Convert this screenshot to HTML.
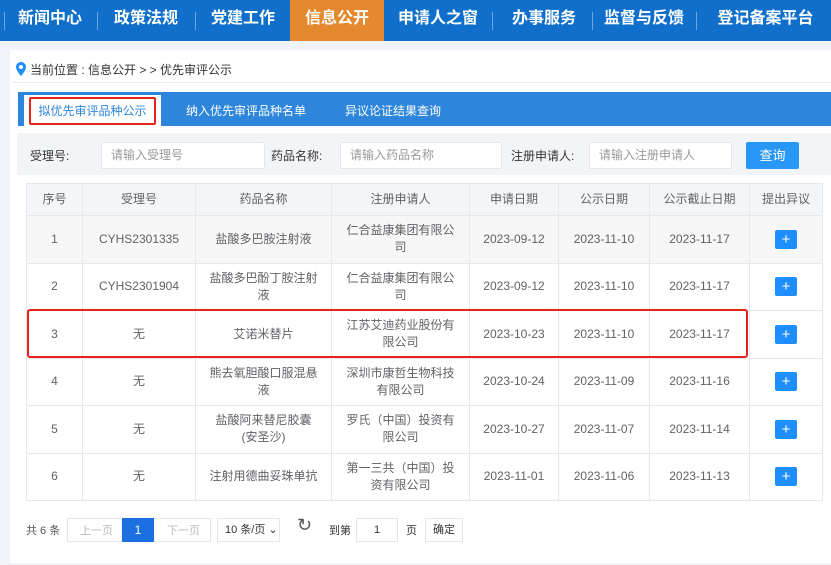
<!DOCTYPE html>
<html><head><meta charset="utf-8"><style>
*{box-sizing:border-box;margin:0;padding:0}
body{width:831px;height:565px;overflow:hidden;background:#f0f3f9;font-family:"Liberation Sans","Noto Sans CJK SC",sans-serif;position:relative;color:#333}
.nav{position:absolute;left:0;top:0;width:831px;height:41px;background:#0f6fca}
.nav span{position:absolute;top:0;height:41px;line-height:38px;color:#fff;font-size:16px;font-weight:bold;text-align:center}
.nav i{position:absolute;top:12px;width:1px;height:18px;background:#6ea6dc}
.card{position:absolute;left:10px;top:50px;width:821px;height:513px;background:#fff}
.ab{position:absolute}
.tabs{position:absolute;left:18px;top:92px;width:813px;height:34px;background:#2d86dc}
table{position:absolute;left:26px;top:183px;border-collapse:collapse;font-size:12px;color:#606266}
td{border:1px solid #e6e8eb;text-align:center;line-height:17px;padding:0 4px}
tr.h td{background:#f4f5f7;height:32px}
tr.r td{height:47.5px}
tr.g td{background:#f7f7f7}
.plus{display:inline-block;width:22px;height:19px;background:#1f8fff;color:#fff;border-radius:2px;line-height:19px;font-size:15px;vertical-align:middle}
.inp{position:absolute;height:27px;border:1px solid #e4e6ea;background:#fff;font-size:12px;color:#999;line-height:25px;padding-left:9px;border-radius:2px}
.lbl{position:absolute;font-size:12px;color:#333}
</style></head><body>
<div class="nav">
<i style="left:4px"></i>
<span style="left:8px;width:84px">新闻中心</span><i style="left:97px"></i>
<span style="left:100px;width:92px">政策法规</span><i style="left:195px"></i>
<span style="left:198px;width:90px">党建工作</span>
<span style="left:290px;width:94px;background:#e4892e">信息公开</span>
<span style="left:388px;width:100px">申请人之窗</span><i style="left:492px"></i>
<span style="left:496px;width:96px">办事服务</span><i style="left:592px"></i>
<span style="left:595px;width:98px">监督与反馈</span><i style="left:696px"></i>
<span style="left:700px;width:131px">登记备案平台</span>
</div>
<div class="card"></div>
<svg class="ab" style="left:16px;top:62px" width="10" height="14" viewBox="0 0 10 14"><path d="M5 0C2.2 0 0 2.2 0 5c0 3.5 5 9 5 9s5-5.5 5-9C10 2.2 7.8 0 5 0z" fill="#1f8fff"/><circle cx="5" cy="5" r="2" fill="#fff"/></svg>
<div class="ab" style="left:30px;top:61px;font-size:12px">当前位置 : 信息公开 &gt; &gt; 优先审评公示</div>
<div class="ab" style="left:12px;top:82px;width:819px;height:1px;background:#e8ebf0"></div>
<div class="tabs"></div>
<div class="ab" style="left:24px;top:95px;width:137px;height:31px;background:#fff"></div>
<div class="ab" style="left:29px;top:97px;width:127px;height:28px;border:2px solid #e8221c;border-radius:2px;font-size:12px;color:#2d86dc;text-align:center;line-height:24px">拟优先审评品种公示</div>
<div class="ab" style="left:186px;top:102px;font-size:12px;color:#fff">纳入优先审评品种名单</div>
<div class="ab" style="left:345px;top:102px;font-size:12px;color:#fff">异议论证结果查询</div>
<div class="ab" style="left:17px;top:133px;width:814px;height:42px;background:#f3f4f7"></div>
<div class="lbl" style="left:30px;top:147px">受理号:</div>
<div class="inp" style="left:101px;top:142px;width:164px">请输入受理号</div>
<div class="lbl" style="left:271px;top:147px">药品名称:</div>
<div class="inp" style="left:340px;top:142px;width:162px">请输入药品名称</div>
<div class="lbl" style="left:511px;top:147px">注册申请人:</div>
<div class="inp" style="left:589px;top:142px;width:143px">请输入注册申请人</div>
<div class="ab" style="left:746px;top:142px;width:53px;height:27px;background:#2897f5;color:#fff;font-size:13px;text-align:center;line-height:27px;border-radius:2px">查询</div>
<table>
<tr class="h"><td style="width:56px">序号</td><td style="width:113px">受理号</td><td style="width:136px">药品名称</td><td style="width:138px">注册申请人</td><td style="width:89px">申请日期</td><td style="width:91px">公示日期</td><td style="width:100px">公示截止日期</td><td style="width:73px">提出异议</td></tr>
<tr class="r g"><td>1</td><td>CYHS2301335</td><td>盐酸多巴胺注射液</td><td>仁合益康集团有限公<br>司</td><td>2023-09-12</td><td>2023-11-10</td><td>2023-11-17</td><td><span class="plus">+</span></td></tr>
<tr class="r"><td>2</td><td>CYHS2301904</td><td>盐酸多巴酚丁胺注射<br>液</td><td>仁合益康集团有限公<br>司</td><td>2023-09-12</td><td>2023-11-10</td><td>2023-11-17</td><td><span class="plus">+</span></td></tr>
<tr class="r"><td>3</td><td>无</td><td>艾诺米替片</td><td>江苏艾迪药业股份有<br>限公司</td><td>2023-10-23</td><td>2023-11-10</td><td>2023-11-17</td><td><span class="plus">+</span></td></tr>
<tr class="r"><td>4</td><td>无</td><td>熊去氧胆酸口服混悬<br>液</td><td>深圳市康哲生物科技<br>有限公司</td><td>2023-10-24</td><td>2023-11-09</td><td>2023-11-16</td><td><span class="plus">+</span></td></tr>
<tr class="r"><td>5</td><td>无</td><td>盐酸阿来替尼胶囊<br>(安圣沙)</td><td>罗氏（中国）投资有<br>限公司</td><td>2023-10-27</td><td>2023-11-07</td><td>2023-11-14</td><td><span class="plus">+</span></td></tr>
<tr class="r"><td>6</td><td>无</td><td>注射用德曲妥珠单抗</td><td>第一三共（中国）投<br>资有限公司</td><td>2023-11-01</td><td>2023-11-06</td><td>2023-11-13</td><td><span class="plus">+</span></td></tr>
</table>
<div class="ab" style="left:27px;top:309px;width:721px;height:49px;border:2px solid #e8221c;border-radius:3px"></div>
<div class="ab" style="left:26px;top:522px;font-size:11px;color:#555">共 6 条</div>
<div class="ab" style="left:67px;top:518px;width:144px;height:24px;border:1px solid #e4e6ea"></div>
<div class="ab" style="left:80px;top:522px;font-size:11px;color:#bbb">上一页</div>
<div class="ab" style="left:122px;top:518px;width:32px;height:24px;background:#1c6fe0;color:#fff;font-size:12px;text-align:center;line-height:24px">1</div>
<div class="ab" style="left:167px;top:522px;font-size:11px;color:#bbb">下一页</div>
<div class="ab" style="left:217px;top:518px;width:63px;height:24px;border:1px solid #e4e6ea;font-size:11px;line-height:22px;padding-left:7px">10 条/页 ⌄</div>
<div class="ab" style="left:297px;top:515px;font-size:18px;color:#555">↻</div>
<div class="ab" style="left:329px;top:522px;font-size:11px">到第</div>
<div class="ab" style="left:356px;top:518px;width:42px;height:24px;border:1px solid #e4e6ea;font-size:11px;text-align:center;line-height:22px">1</div>
<div class="ab" style="left:406px;top:522px;font-size:11px">页</div>
<div class="ab" style="left:425px;top:518px;width:38px;height:24px;border:1px solid #e4e6ea;font-size:11px;text-align:center;line-height:22px">确定</div>
</body></html>
